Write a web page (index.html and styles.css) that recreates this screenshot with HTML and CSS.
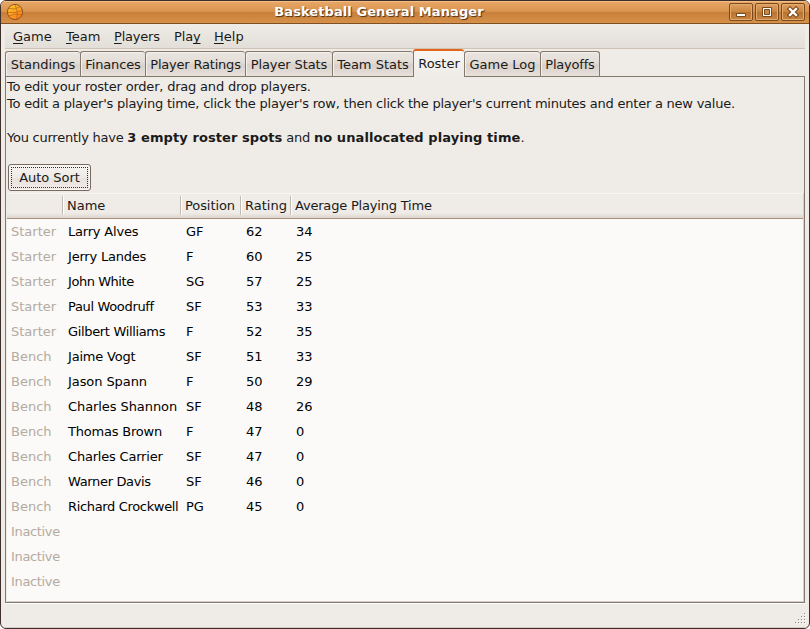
FILE: index.html
```html
<!DOCTYPE html>
<html lang="en">
<head>
<meta charset="utf-8">
<title>Basketball General Manager</title>
<link rel="stylesheet" href="styles.css">
</head>
<body>
<div class="window">
  <header class="titlebar">
    <svg class="ball" width="18" height="18" viewBox="0 0 18 18">
      <defs><linearGradient id="g" x1="0" y1="0" x2=".6" y2="1"><stop offset="0" stop-color="#ffd22a"/><stop offset="1" stop-color="#ff7d1c"/></linearGradient></defs>
      <circle cx="9" cy="9" r="7.600" fill="url(#g)" stroke="#8a5526" stroke-width="1"/>
      <path d="M3 5.500Q9 7.500 14 3.500M1.500 9.500Q9 10.500 16.500 7.500M2.500 13Q9 10 16 11.500M9 1.500Q12.500 8 11 16.500" fill="none" stroke="#b0651d" stroke-width=".7"/>
    </svg>
    <h1 class="title">Basketball General Manager</h1>
    <div class="controls">
      <button class="control" aria-label="Minimize"><svg width="22" height="16" viewBox="0 0 22 16"><path d="M6.500 9.500h9v3h-9z" fill="#fff" stroke="#7a4a1c"/></svg></button>
      <button class="control" aria-label="Maximize"><svg width="22" height="16" viewBox="0 0 22 16"><path d="M6.500 3.500h9v9h-9z" fill="#fff" stroke="#7a4a1c"/><path d="M8.500 5.500h5v5h-5z" fill="#c98944" stroke="#7a4a1c"/></svg></button>
      <button class="control" aria-label="Close"><svg width="22" height="16" viewBox="0 0 22 16"><path d="M8 5l6 6m0-6l-6 6" stroke="#7a4a1c" stroke-width="4.500" stroke-linecap="square"/><path d="M8 5l6 6m0-6l-6 6" stroke="#fff" stroke-width="2.300" stroke-linecap="square"/></svg></button>
    </div>
  </header>
  <nav class="menu">
    <span class="menu-game"><u>G</u>ame</span><span class="menu-team"><u>T</u>eam</span><span class="menu-players"><u>P</u>layers</span><span class="menu-play">Pla<u>y</u></span><span><u>H</u>elp</span>
  </nav>
  <div class="tabs">
    <div class="tab w-standings">Standings</div>
    <div class="tab w-finances">Finances</div>
    <div class="tab w-ratings">Player Ratings</div>
    <div class="tab w-pstats">Player Stats</div>
    <div class="tab w-tstats">Team Stats</div>
    <div class="tab active">Roster</div>
    <div class="tab w-log">Game Log</div>
    <div class="tab w-playoffs">Playoffs</div>
  </div>
  <main class="panel">
    <div class="intro">
      <p class="t2">To edit your roster order, drag and drop players.</p>
      <p class="hint">To edit a player's playing time, click the player's row, then click the player's current minutes and enter a new value.</p>
      <p class="status">You currently have <b>3 empty roster spots</b> and <b>no unallocated playing time</b>.</p>
    </div>
    <button class="sort"><span>Auto Sort</span></button>
    <div class="table">
      <div class="row head"><span></span><span>Name</span><span class="t1">Position</span><span>Rating</span><span class="t2">Average Playing Time</span></div>
      <div class="row"><i>Starter</i><span class="t2">Larry Alves</span><span>GF</span><span>62</span><span>34</span></div>
      <div class="row"><i>Starter</i><span class="t2">Jerry Landes</span><span>F</span><span>60</span><span>25</span></div>
      <div class="row"><i>Starter</i><span class="t4">John White</span><span>SG</span><span>57</span><span>25</span></div>
      <div class="row"><i>Starter</i><span class="t3">Paul Woodruff</span><span>SF</span><span>53</span><span>33</span></div>
      <div class="row"><i>Starter</i><span class="t3">Gilbert Williams</span><span>F</span><span>52</span><span>35</span></div>
      <div class="row"><i>Bench</i><span class="t2">Jaime Vogt</span><span>SF</span><span>51</span><span>33</span></div>
      <div class="row"><i>Bench</i><span class="t1">Jason Spann</span><span>F</span><span>50</span><span>29</span></div>
      <div class="row"><i>Bench</i><span class="t1">Charles Shannon</span><span>SF</span><span>48</span><span>26</span></div>
      <div class="row"><i>Bench</i><span class="t2">Thomas Brown</span><span>F</span><span>47</span><span>0</span></div>
      <div class="row"><i>Bench</i><span class="t2">Charles Carrier</span><span>SF</span><span>47</span><span>0</span></div>
      <div class="row"><i>Bench</i><span class="t3">Warner Davis</span><span>SF</span><span>46</span><span>0</span></div>
      <div class="row"><i>Bench</i><span class="t3">Richard Crockwell</span><span>PG</span><span>45</span><span>0</span></div>
      <div class="row"><i class="t3">Inactive</i></div>
      <div class="row"><i class="t3">Inactive</i></div>
      <div class="row"><i class="t3">Inactive</i></div>
    </div>
  </main>
  <footer class="statusbar">
    <svg width="12" height="12" viewBox="0 0 12 12" shape-rendering="crispEdges"><path d="M10 1h1M7 4h1m2 0h1M4 7h1m2 0h1m2 0h1M1 10h1m2 0h1m2 0h1m2 0h1" stroke="#fff" stroke-width="1" transform="translate(1 1.500)"/><path d="M10 1h1M7 4h1m2 0h1M4 7h1m2 0h1m2 0h1M1 10h1m2 0h1m2 0h1m2 0h1" stroke="#8d8882" stroke-width="1" transform="translate(0 .5)"/></svg>
  </footer>
</div>
</body>
</html>
```
FILE: styles.css
```css
* { box-sizing: border-box; }
body { margin: 0; background: #fff; color: #1a1a1a; font: 13px/17px "DejaVu Sans", sans-serif; overflow: hidden; }
button { font: inherit; color: inherit; padding: 0; margin: 0; }
p, h1 { margin: 0; }
.window { width: 810px; height: 629px; border: 1px solid #3d302b; border-radius: 6px; background: #efebe6; display: flex; flex-direction: column; overflow: hidden; white-space: nowrap; }
.titlebar { height: 23px; flex: none; display: flex; align-items: center; border-bottom: 1px solid #7e5023; box-shadow: inset 0 1px #f3bd83; background: linear-gradient(#e8a869, #d9934f 48%, #c87f39 52%, #d69149); padding: 0 4px 0 5px; }
.ball { flex: none; }
.title { flex: 1; text-align: center; font-size: 13px; line-height: 22px; letter-spacing: .08px; color: #fff; text-shadow: 1px 1px 1px #4b3015; padding-left: 5px; }
.controls { display: flex; gap: 2px; }
.control { width: 24px; height: 18px; border: 1px solid #7c4b1d; border-radius: 2px; background: linear-gradient(#dfa060, #c9853f 50%, #b97432 52%, #c98542); box-shadow: inset 0 0 0 1px #e3aa70; }
.control svg { display: block; }
.menu { height: 25px; flex: none; margin: 0 4px; padding: 4px 8px; display: flex; background: linear-gradient(#efebe6, #e3ded8); border-bottom: 1px solid #cfc3b6; }
.menu u { text-underline-offset: 2px; text-decoration-thickness: 1px; text-decoration-skip-ink: none; }
.menu-game { width: 53px; }
.menu-team { width: 48px; }
.menu-players { width: 60px; letter-spacing: -.2px; }
.menu-play { width: 40px; letter-spacing: -.15px; }
.tabs { height: 27px; flex: none; margin: 0 4px; display: flex; align-items: flex-end; }
.tab { height: 25px; border: 1px solid #84796d; border-bottom: 0; border-right: 0; border-radius: 3px 3px 0 0; text-align: center; line-height: 25px; background: linear-gradient(#ebe6e1, #e3dcd6 45%, #d9d0c9 55%, #e7e1dc); box-shadow: inset 1px 1px #f4f0ed; }
.w-standings { width: 75px; }
.w-finances { width: 65px; letter-spacing: -.15px; }
.w-ratings { width: 100px; letter-spacing: -.2px; }
.w-pstats { width: 87px; letter-spacing: -.1px; }
.w-tstats { width: 81px; }
.active { width: 51px; height: 28px; margin-bottom: -1px; border-top: 2px solid #e2651a; background: linear-gradient(#f8f6f3, #efebe6); z-index: 1; line-height: 25px; box-shadow: none; }
.w-log { width: 76px; }
.w-playoffs { width: 60px; border-right: 1px solid #84796d; letter-spacing: -.2px; }
.panel { height: 527px; flex: none; margin: 0 4px; border: 1px solid #84796d; box-shadow: 0 1px #fff; display: flex; flex-direction: column; }
.intro { padding: 1px 1px 0; height: 87px; flex: none; }
.t1 { letter-spacing: -.08px; }
.t2 { letter-spacing: -.2px; }
.t3 { letter-spacing: -.34px; }
.t4 { letter-spacing: -.45px; }
.hint { letter-spacing: -.23px; }
.status { margin-top: 17px; letter-spacing: -.24px; }
.status b { letter-spacing: .08px; }
.sort { width: 83px; height: 27px; flex: none; margin: 0 0 2px 2px; padding: 2px; border: 1px solid #776b60; border-radius: 3px; background: linear-gradient(#f6f3f0, #eeeae6 50%, #e8e2dd 52%, #efebe7); box-shadow: inset 0 0 0 1px #f8f5f2; }
.sort span { display: block; height: 21px; line-height: 19px; border: 1px dotted #333; letter-spacing: -.05px; }
.table { flex: 1; background: #fbfaf8; border-right: 1px solid #d8d0c8; border-bottom: 1px solid #d8d0c8; margin-left: 1px; }
.row { height: 25px; line-height: 25px; display: grid; grid-template-columns: 56px 118px 60px 50px 1fr; color: #000; }
.row span, .row i { padding-left: 5px; font-style: normal; }
.row i { padding-left: 4px; color: #b4aaa1; }
.head { height: 26px; align-items: center; background: linear-gradient(#efebe6 80%, #ddd5ce); border-bottom: 1px solid #a48f80; box-shadow: inset 0 1px #f8f6f4; color: #1a1a1a; }
.head span { height: 19px; line-height: 19px; padding-left: 4px; border-right: 1px solid #c2bbb3; box-shadow: 1px 0 #fff; }
.head span:last-child { border-right: 0; box-shadow: none; }
.statusbar { flex: 1; display: flex; justify-content: flex-end; align-items: flex-end; padding: 0 3px 3px 0; border-bottom: 1px solid #d3cbc3; }
```
